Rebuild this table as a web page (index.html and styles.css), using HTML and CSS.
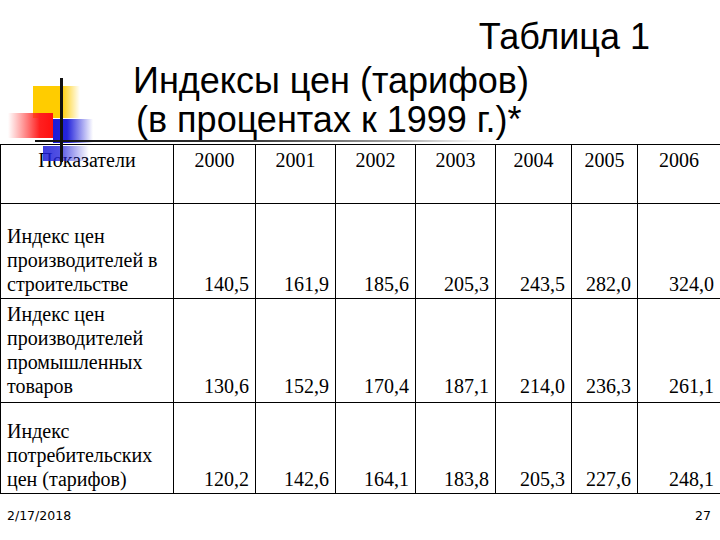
FILE: index.html
```html
<!DOCTYPE html>
<html lang="ru">
<head>
<meta charset="utf-8">
<title>Таблица 1</title>
<link rel="stylesheet" href="styles.css">
</head>
<body>
<div class="slide">
  <div class="title">
    <div class="t-num">Таблица 1</div>
    <div class="t-line t-l2">Индексы цен (тарифов)</div>
    <div class="t-line t-l3">(в процентах к 1999 г.)*</div>
  </div>

  <table class="data">
    <colgroup>
      <col class="c0"><col class="c1"><col class="c2"><col class="c3"><col class="c4"><col class="c5"><col class="c6"><col class="c7">
    </colgroup>
    <tr class="head">
      <th>Показатели</th><th>2000</th><th>2001</th><th>2002</th><th>2003</th><th>2004</th><th>2005</th><th>2006</th>
    </tr>
    <tr class="r1">
      <td class="name">Индекс цен производителей в строительстве</td>
      <td>140,5</td><td>161,9</td><td>185,6</td><td>205,3</td><td>243,5</td><td>282,0</td><td>324,0</td>
    </tr>
    <tr class="r2">
      <td class="name">Индекс цен производителей промышленных товаров</td>
      <td>130,6</td><td>152,9</td><td>170,4</td><td>187,1</td><td>214,0</td><td>236,3</td><td>261,1</td>
    </tr>
    <tr class="r3">
      <td class="name">Индекс потребительских цен (тарифов)</td>
      <td>120,2</td><td>142,6</td><td>164,1</td><td>183,8</td><td>205,3</td><td>227,6</td><td>248,1</td>
    </tr>
  </table>

  <div class="footer">
    <span>2/17/2018</span>
    <span>27</span>
  </div>

  <svg class="logo" width="520" height="80" viewBox="0 0 520 80" aria-hidden="true">
    <defs>
      <linearGradient id="gy" x1="0" y1="0" x2="1" y2="0">
        <stop offset="0" stop-color="#ffcc00"/>
        <stop offset="0.6" stop-color="#ffcc00"/>
        <stop offset="1" stop-color="#ffcc00" stop-opacity="0"/>
      </linearGradient>
      <linearGradient id="gr" x1="0" y1="0" x2="1" y2="0">
        <stop offset="0" stop-color="#ff3030" stop-opacity="0"/>
        <stop offset="0.7" stop-color="#ff2020"/>
        <stop offset="1" stop-color="#ff1010"/>
      </linearGradient>
      <linearGradient id="gb" x1="0" y1="0" x2="1" y2="0">
        <stop offset="0" stop-color="#1c1cd8"/>
        <stop offset="0.35" stop-color="#2424dc"/>
        <stop offset="1" stop-color="#2424dc" stop-opacity="0"/>
      </linearGradient>
      <linearGradient id="gl" x1="0" y1="0" x2="1" y2="0">
        <stop offset="0" stop-color="#111"/>
        <stop offset="0.45" stop-color="#333"/>
        <stop offset="0.8" stop-color="#aaa"/>
        <stop offset="1" stop-color="#ddd" stop-opacity="0"/>
      </linearGradient>
    </defs>
    <rect x="33" y="16" width="47" height="32" fill="url(#gy)"/>
    <rect x="8" y="43" width="45" height="25" fill="url(#gr)"/>
    <rect x="53" y="49" width="40" height="24" fill="url(#gb)"/>
    <rect x="35" y="70" width="465" height="2" fill="url(#gl)"/>
  </svg>
  <div class="logo-blue"></div>
  <div class="logo-vline"></div>
</div>
</body>
</html>
```
FILE: styles.css
```css
html, body {
  margin: 0;
  padding: 0;
  background: #fff;
}
.slide {
  position: relative;
  width: 720px;
  height: 540px;
  overflow: hidden;
  font-family: "Liberation Serif", "Times New Roman", serif;
  color: #000;
}
.logo {
  position: absolute;
  left: 0;
  top: 70px;
  z-index: 2;
}
.logo-blue {
  position: absolute;
  left: 43px;
  top: 146px;
  width: 46px;
  height: 15px;
  z-index: 3;
  background: linear-gradient(to right, rgba(28, 28, 216, 0.85) 0%, rgba(36, 36, 220, 0.8) 35%, rgba(36, 36, 220, 0) 100%);
}
.logo-vline {
  position: absolute;
  left: 60px;
  top: 78px;
  width: 3px;
  height: 84px;
  z-index: 4;
  background: #111;
}
.title {
  font-family: "Liberation Sans", Arial, sans-serif;
  font-size: 36px;
  height: 144px;
  box-sizing: border-box;
  padding-top: 17px;
}
.t-num {
  line-height: 40px;
  text-align: right;
  padding-right: 70px;
}
.t-line {
  line-height: 39px;
  padding-left: 133px;
}
.t-l2 { margin-top: 4px; }
.t-l3 { padding-left: 136px; }

.data {
  border-collapse: collapse;
  table-layout: fixed;
  width: 720px;
  font-size: 20px;
  line-height: 24px;
}
.c0 { width: 173px; }
.c1 { width: 82px; }
.c2 { width: 80px; }
.c3 { width: 80px; }
.c4 { width: 80px; }
.c5 { width: 76px; }
.c6 { width: 66px; }
.c7 { width: 83px; }
.data th, .data td {
  border: 1px solid #000;
  padding: 0 6px 2px 6px;
}
.data th {
  font-weight: normal;
  text-align: center;
  vertical-align: top;
  padding-top: 3px;
}
.data td {
  text-align: right;
  vertical-align: bottom;
}
.data td.name {
  text-align: left;
}
.head { height: 59px; }
.r1 { height: 95px; }
.r2 { height: 104px; }
.r2 td { padding-bottom: 4px; }
.r3 { height: 91px; }

.footer {
  display: flex;
  justify-content: space-between;
  padding: 14px 9px 0 7px;
  font-family: "DejaVu Sans", Verdana, sans-serif;
  font-size: 12.5px;
  line-height: 16px;
}
```
